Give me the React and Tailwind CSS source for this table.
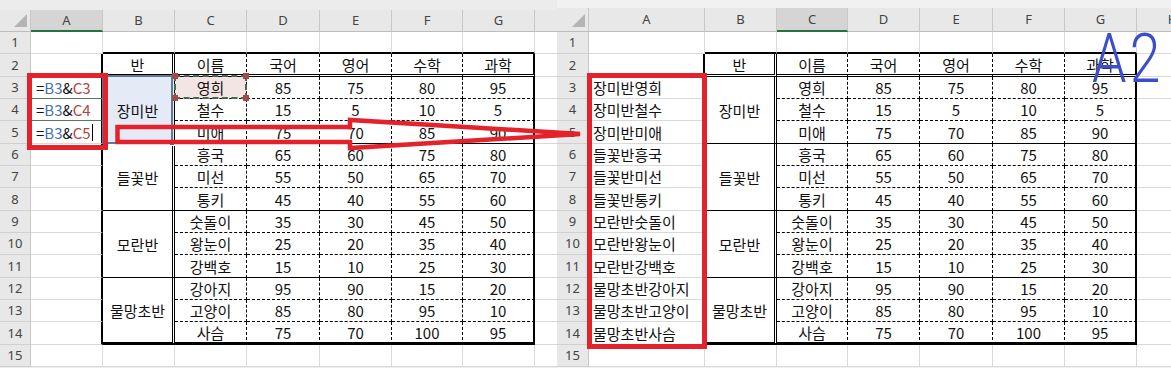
import React from 'react';

// border pieces, one side each
const R = {
  grid: '[border-right:1px_solid_#d9d9d9]',
  thick: '[border-right:2px_solid_#000]',
  dbl: '[border-right:3px_double_#000]',
  dash: '[border-right:1px_dashed_#000]',
};
const B = {
  grid: '[border-bottom:1px_solid_#d9d9d9]',
  top: '[border-bottom:2px_solid_#000]',
  dbl: '[border-bottom:3px_double_#000]',
  dash: '[border-bottom:1px_dashed_#000]',
  solid: '[border-bottom:1px_solid_#000]',
  end: '[border-bottom:3px_solid_#000]',
};

const LETTERS = ['A', 'B', 'C', 'D', 'E', 'F', 'G', 'H'];
const HEAD = ['반', '이름', '국어', '영어', '수학', '과학'];

const groups = [
  ['장미반', [['영희', 85, 75, 80, 95], ['철수', 15, 5, 10, 5], ['미애', 75, 70, 85, 90]]],
  ['들꽃반', [['흥국', 65, 60, 75, 80], ['미선', 55, 50, 65, 70], ['통키', 45, 40, 55, 60]]],
  ['모란반', [['숫돌이', 35, 30, 45, 50], ['왕눈이', 25, 20, 35, 40], ['강백호', 15, 10, 25, 30]]],
  ['물망초반', [['강아지', 95, 90, 15, 20], ['고양이', 85, 80, 95, 10], ['사슴', 75, 70, 100, 95]]],
];

const ROWS = groups.flatMap(([cls, list]) =>
  list.map(([name, ...scores], i) => ({ cls, name, scores, first: i === 0, last: i === 2 }))
);

const cellFont = "font-['Noto_Sans_CJK_KR',sans-serif] text-[15px] text-[#111] leading-none";
const hdrFont = "font-['Noto_Sans','Noto_Sans_CJK_KR',sans-serif] text-[13px] text-[#444] leading-none";

function rightBorder(r, c) {
  if (r < 2 || r > 14) return R.grid;
  if (c === 1 || c === 7) return R.thick;
  if (c === 2) return R.dbl;
  if (c >= 3 && c <= 6) return R.dash;
  return R.grid;
}

function bottomBorder(r, c) {
  if (c < 2 || c > 7) return B.grid;
  if (r === 1) return B.top;
  if (r === 2) return B.dbl;
  if (r === 14) return B.end;
  if (r >= 3 && r <= 13) return ROWS[r - 3].last ? B.solid : B.dash;
  return B.grid;
}

function Formula({ row, caret }) {
  return (
    <span className="flex items-center">
      =<span className="text-[#4272b0]">B3</span>&amp;<span className="text-[#b2463f]">C{row}</span>
      {caret && <span className="ml-[1px] w-px h-[17px] bg-black" />}
    </span>
  );
}

function Sheet({ side }) {
  const left = side === 'left';
  const sel = left ? 1 : 3;
  const cells = [];

  // column header row
  cells.push(
    <div key="corner" className="relative bg-[#e8e8e8] [border-right:1px_solid_#c8c8c8] [border-bottom:1px_solid_#bdbdbd]">
      <svg className="absolute right-[3px] bottom-[4px]" width="13" height="13">
        <polygon points="13,0 13,13 0,13" fill="#b4b4b4" />
      </svg>
    </div>
  );
  LETTERS.forEach((l, i) => {
    const c = i + 1;
    cells.push(
      <div
        key={'h' + l}
        className={`flex items-center justify-center ${hdrFont} [border-right:1px_solid_#c8c8c8] ${
          c === sel ? 'bg-[#d5d5d5] [border-bottom:2px_solid_#217346]' : 'bg-[#e8e8e8] [border-bottom:1px_solid_#bdbdbd]'
        }`}
      >
        {l}
      </div>
    );
  });

  for (let r = 1; r <= 15; r++) {
    cells.push(
      <div
        key={'r' + r}
        className={`flex items-center justify-center bg-[#e8e8e8] ${hdrFont} [border-right:1px_solid_#c8c8c8] [border-bottom:1px_solid_#d0d0d0]`}
      >
        {r}
      </div>
    );
    const row = r >= 3 && r <= 14 ? ROWS[r - 3] : null;

    for (let c = 1; c <= 8; c++) {
      // merged class cells in column B
      if (c === 2 && row && !row.first) continue;

      let content = null;
      let align = 'justify-center';
      let extra = '';
      let span = '';
      let over = null;
      let rb = rightBorder(r, c);
      let bb = bottomBorder(r, c);

      if (r === 2 && c >= 2 && c <= 7) content = HEAD[c - 2];

      if (row) {
        if (c === 2) {
          content = row.cls;
          span = 'row-span-3';
          bb = r === 12 ? B.end : B.solid;
        }
        if (c === 3) content = row.name;
        if (c >= 4 && c <= 7) content = row.scores[c - 4];
        if (c === 1) {
          align = left ? 'justify-start pl-[5px]' : 'justify-start pl-[4px]';
          if (!left) content = row.cls + row.name;
        }
      }

      if (left && c === 1 && r >= 3 && r <= 5) {
        content = <Formula row={r} caret={r === 5} />;
        if (r < 5) bb = '[border-bottom:1px_solid_#4f7d5c]';
      }
      if (left && c === 2 && r === 3) {
        extra = 'relative bg-[#e4ebf6]';
        over = (
          <>
            <div className="absolute -top-[2px] -left-[1px] -right-[1px] -bottom-[1px] border-2 border-[#5b7a9c]" />
            <div className="absolute -right-[3px] -bottom-[3px] w-[6px] h-[6px] bg-[#4e6f94] border border-white" />
          </>
        );
      }
      if (left && c === 3 && r === 3) {
        extra = 'relative bg-[#f4e5e5]';
        over = (
          <>
            <div className="absolute -top-[2px] -left-[1px] -right-[1px] -bottom-[1px] border-2 border-dashed border-[#47694f]" />
            <div className="absolute -left-[3px] -top-[4px] w-[6px] h-[6px] bg-[#a54a4a]" />
            <div className="absolute -right-[3px] -top-[4px] w-[6px] h-[6px] bg-[#a54a4a]" />
            <div className="absolute -left-[3px] -bottom-[3px] w-[6px] h-[6px] bg-[#a54a4a]" />
            <div className="absolute -right-[3px] -bottom-[3px] w-[6px] h-[6px] bg-[#a54a4a]" />
          </>
        );
      }

      cells.push(
        <div
          key={r + '-' + c}
          className={`flex items-center ${align} ${span} ${extra} ${rb} ${bb} ${cellFont} whitespace-nowrap`}
        >
          {over}
          <span className="relative">{content}</span>
        </div>
      );
    }
  }

  return (
    <div className={left ? 'w-[557px] h-[368px] shrink-0 overflow-hidden bg-[#ececec]' : 'w-[614px] h-[368px] shrink-0 overflow-hidden bg-[#f1f1f1]'}>
      <div className={left ? 'h-[10px]' : 'h-[8px]'} />
      <div
        className={
          left
            ? 'grid w-max bg-white grid-cols-[31px_72px_72px_72px_73px_72px_71px_72px_72px] grid-rows-[22px_22px_23px_22px_22px_23px_22px_22px_23px_22px_22px_23px_22px_22px_23px_22px]'
            : 'grid w-max bg-white grid-cols-[32px_116px_72px_71px_72px_73px_72px_72px_72px] grid-rows-[24px_22px_23px_22px_22px_23px_22px_22px_23px_22px_22px_23px_22px_22px_23px_22px]'
        }
      >
        {cells}
      </div>
    </div>
  );
}

export default function App() {
  return (
    <div className="relative flex w-[1171px] h-[368px] overflow-hidden bg-white">
      <Sheet side="left" />
      <Sheet side="right" />

      {/* red annotation marks */}
      <svg className="absolute inset-0 pointer-events-none" width="1171" height="368">
        <g fill="none" stroke="#e3222b" strokeWidth="5">
          <rect x="29.5" y="75.5" width="76" height="72" />
          <polygon points="117.5,127 350,127 350,120 580,134 350,148 350,142 117.5,142" strokeWidth="4.5" />
          <rect x="589.5" y="75.5" width="115" height="271" />
        </g>
      </svg>
      <div className="absolute left-[1092px] top-[24px] origin-left scale-x-[0.8] tracking-[4px] font-['Roboto',sans-serif] font-light text-[69px] leading-none text-[#3d4fc8]">
        A2
      </div>
    </div>
  );
}
